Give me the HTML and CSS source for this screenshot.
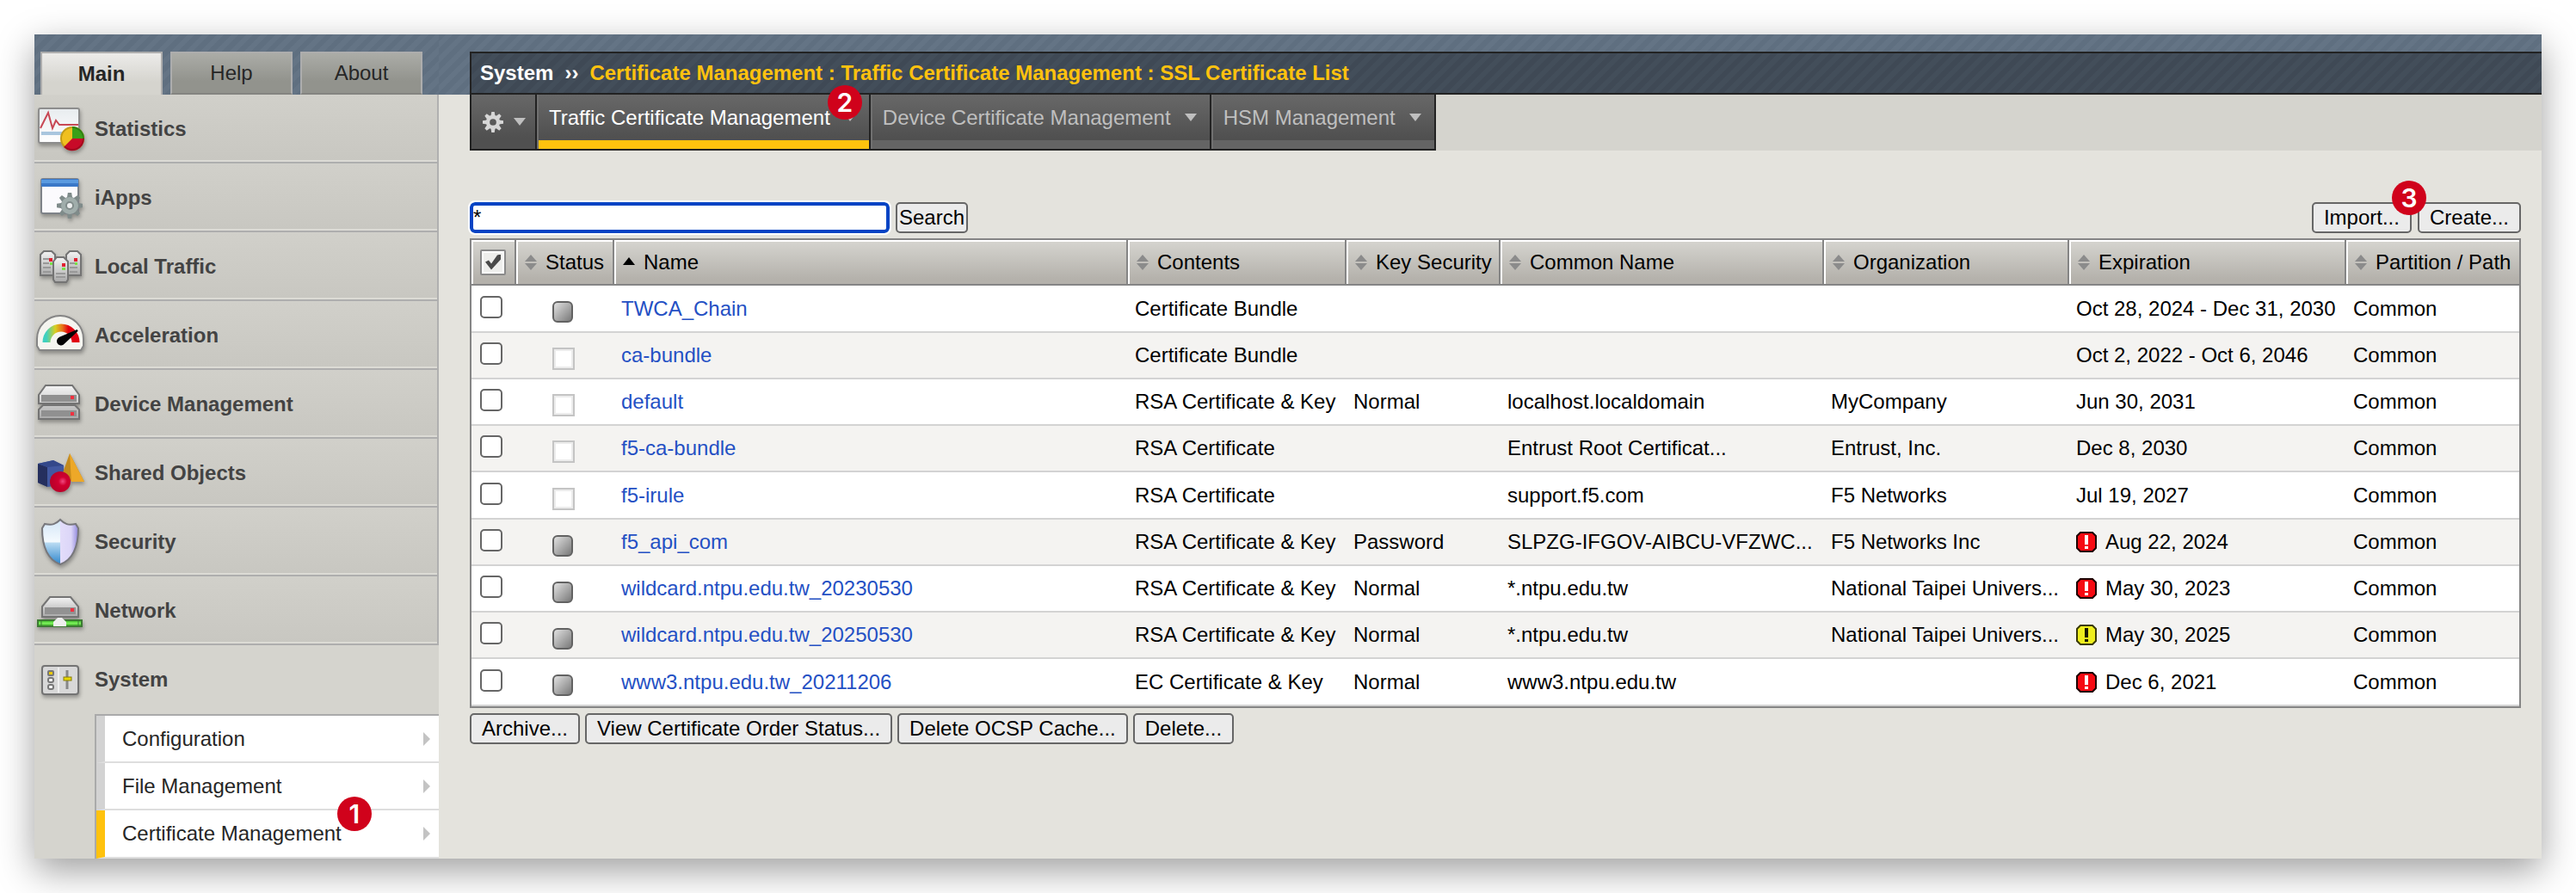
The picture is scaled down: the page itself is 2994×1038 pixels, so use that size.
FILE: index.html
```html
<!DOCTYPE html>
<html lang="en">
<head>
<meta charset="utf-8">
<title>SSL Certificate List</title>
<link rel="stylesheet" href="styles.css">
</head>
<body>
<svg class="defs" aria-hidden="true">
  <defs>
    <linearGradient id="metal" x1="0" y1="0" x2="0" y2="1"><stop offset="0" stop-color="#f4f4f4"/><stop offset="1" stop-color="#a9a9a9"/></linearGradient>
    <linearGradient id="sheet" x1="0" y1="0" x2="0" y2="1"><stop offset="0" stop-color="#e8ecef"/><stop offset="1" stop-color="#ffffff"/></linearGradient>
    <linearGradient id="chip" x1="0" y1="0" x2="1" y2="1"><stop offset="0" stop-color="#e6e6e6"/><stop offset="1" stop-color="#747474"/></linearGradient>
    <linearGradient id="dial" x1="0" y1="0" x2="1" y2="0"><stop offset="0" stop-color="#3fd0c0"/><stop offset=".3" stop-color="#d8d020"/><stop offset=".55" stop-color="#e87018"/><stop offset=".75" stop-color="#e00010"/></linearGradient>
    <linearGradient id="cable" x1="0" y1="0" x2="0" y2="1"><stop offset="0" stop-color="#2db51a"/><stop offset=".5" stop-color="#7df05c"/><stop offset="1" stop-color="#2a9a18"/></linearGradient>
    <linearGradient id="shieldl" x1="0" y1="0" x2="0" y2="1"><stop offset="0" stop-color="#d4e6f7"/><stop offset=".5" stop-color="#f4fafe"/><stop offset=".52" stop-color="#b9dbf2"/><stop offset="1" stop-color="#2f86cc"/></linearGradient>
    <linearGradient id="shieldr" x1="0" y1="0" x2="1" y2="0"><stop offset="0" stop-color="#e3ddfa"/><stop offset=".6" stop-color="#dcd6f8"/><stop offset="1" stop-color="#8f86dc"/></linearGradient>
    <radialGradient id="ball" cx=".62" cy=".48" r=".6"><stop offset="0" stop-color="#f04a80"/><stop offset=".35" stop-color="#d00030"/><stop offset="1" stop-color="#b80028"/></radialGradient>
    <symbol id="sort" viewBox="0 0 14 18"><path d="M7 0l7 8H0zM7 18l7-8H0z" fill="#8b8b8b"/></symbol>
    <symbol id="on" viewBox="0 0 24 25"><rect x="1" y="1" width="22" height="23" rx="5" fill="url(#chip)" stroke="#626262" stroke-width="2"/></symbol>
    <symbol id="off" viewBox="0 0 26 26"><rect x="1" y="1" width="24" height="24" fill="#fff" stroke="#c4c4c4" stroke-width="2"/><path d="M3 3h20v20H3z" fill="none" stroke="#ececec" stroke-width="2"/></symbol>
    <symbol id="expired" viewBox="0 0 24 24"><path d="M5 1h14l4 4v14l-4 4H5l-4-4V5z" fill="#f60a12" stroke="#1c0000" stroke-width="2"/><path d="M10 4h4v11h-4zM10 17h4v3h-4z" fill="#fff"/></symbol>
    <symbol id="warning" viewBox="0 0 24 24"><path d="M5 1h14l4 4v14l-4 4H5l-4-4V5z" fill="#eeee1e" stroke="#3a3a08" stroke-width="2"/><path d="M10 4h4v11h-4zM10 17h4v3h-4z" fill="#1a1a00"/></symbol>
    <symbol id="gear" viewBox="0 0 28 28"><g fill="currentColor"><path d="M12 0h4l1 6h-6zM12 28h4l1-6h-6zM0 12v4l6 1v-6zM28 12v4l-6 1v-6z"/><path d="M12 0h4l1 6h-6zM12 28h4l1-6h-6zM0 12v4l6 1v-6zM28 12v4l-6 1v-6z" transform="rotate(45 14 14)"/></g><circle cx="14" cy="14" r="7" fill="none" stroke="currentColor" stroke-width="5"/></symbol>
  </defs>
</svg>

<div class="window">
  <nav class="side" aria-label="Primary">
    <div class="side-tabs">
      <button class="side-tab active" type="button">Main</button>
      <button class="side-tab" type="button">Help</button>
      <button class="side-tab" type="button">About</button>
    </div>
    <ul class="menu">
      <li><a class="item" href="#statistics">
        <svg class="icon" viewBox="0 0 60 60"><rect x="5" y="6" width="47" height="40" rx="2" fill="url(#sheet)" stroke="#8d8d8d" stroke-width="2"/><path d="M8 35h42" stroke="#a9c6de" stroke-width="4"/><path d="M7 29l4-8 5-10 5 18 4-9 4 5h22" fill="none" stroke="#c84855" stroke-width="2"/><circle cx="44" cy="41" r="14" fill="#f0c020"/><path d="M44 41V27a14 14 0 0 1 14 14z" fill="#3aa018"/><path d="M44 41h14a14 14 0 0 1-24 10z" fill="#c80a28"/><circle cx="44" cy="41" r="13" fill="none" stroke="#00000030" stroke-width="2"/></svg>
        Statistics</a></li>
      <li><a class="item" href="#iapps">
        <svg class="icon" viewBox="0 0 60 60"><rect x="8" y="8" width="43" height="40" rx="2" fill="#fbfafd" stroke="#7e8288" stroke-width="2"/><path d="M8 8h43v9H8z" fill="#3a78c8"/><path d="M8 9h43v4H8z" fill="#5a9ae0"/><svg x="26" y="24" width="30" height="30" color="#7f8b8a"><use href="#gear"/></svg><circle cx="41" cy="39" r="7" fill="none" stroke="#a0adab" stroke-width="6"/><circle cx="41" cy="39" r="4" fill="#eef0f0" stroke="#818c8b" stroke-width="2"/></svg>
        iApps</a></li>
      <li><a class="item" href="#local-traffic">
        <svg class="icon" viewBox="0 0 60 60"><g fill="url(#metal)" stroke="#747474" stroke-width="2"><path d="M7 16l4-4h9l4 4v24H7zM37 16l4-4h9l4 4v24H37z"/><path d="M22 24l4-5h8l5 5v21l-2 3H24l-2-3z"/></g><path d="M10 21h8M10 26h7M10 31h9M10 36h9M41 26h6M41 31h9M41 36h9M25 38h11M25 42h11" stroke="#999" stroke-width="2"/><path d="M17 20h4v4h-4zM46 20h4v4h-4zM32 26h4v4h-4z" fill="#e02030"/><path d="M18 25h3v3h-3zM47 25h3v3h-3zM32 31h4v3h-4z" fill="#7be04a"/></svg>
        Local Traffic</a></li>
      <li><a class="item" href="#acceleration">
        <svg class="icon" viewBox="0 0 60 60"><path d="M6 47l-3-5v-8a27 27 0 0 1 54 0v8l-3 5z" fill="#f5f5f0" stroke="#858585" stroke-width="2"/><path d="M14 38a17 17 0 0 1 34 0" fill="none" stroke="url(#dial)" stroke-width="9"/><path d="M50 24L29 33a4 4 0 0 0 4 7z" fill="#050505" stroke="#050505" stroke-width="2"/></svg>
        Acceleration</a></li>
      <li><a class="item" href="#device-management">
        <svg class="icon" viewBox="0 0 60 60"><g fill="url(#metal)" stroke="#747474" stroke-width="2"><path d="M5 19L13 8h31l8 11v10H5zM5 36l5-5h37l5 5v11H5z"/></g><path d="M8 19h41v8H8zM8 37h41v7H8z" fill="#909090"/><path d="M42 20h4v4h-4zM42 39h4v4h-4z" fill="#f03040"/></svg>
        Device Management</a></li>
      <li><a class="item" href="#shared-objects">
        <svg class="icon" viewBox="0 0 60 60"><path d="M4 19l18-4 12 6v21l-18 4-12-5z" fill="#4258a0"/><path d="M4 19l11 4v23L4 41z" fill="#252f5e"/><path d="M4 19l18-4 12 6-19 2z" fill="#34488a"/><path d="M41 7L30 38l28 2z" fill="#c48a1c"/><path d="M41 7l2 33h15z" fill="#eda828"/><circle cx="30" cy="40" r="12" fill="url(#ball)"/></svg>
        Shared Objects</a></li>
      <li><a class="item" href="#security">
        <svg class="icon" viewBox="0 0 60 60"><path d="M30 4c-5 5-9 7-18 5l-3 5c0 20 5 36 21 42z" fill="url(#shieldl)"/><path d="M30 4c5 5 9 7 18 5l3 5c0 20-5 36-21 42z" fill="url(#shieldr)"/><path d="M30 4c-5 5-9 7-18 5l-3 5c0 20 5 36 21 42 16-6 21-22 21-42l-3-5c-9 2-13 0-18-5z" fill="none" stroke="#77777c" stroke-width="2"/></svg>
        Security</a></li>
      <li><a class="item" href="#network">
        <svg class="icon" viewBox="0 0 60 60"><path d="M9 25l9-11h24l9 11v12H9z" fill="url(#metal)" stroke="#747474" stroke-width="2"/><path d="M12 26h36v8H12z" fill="#929292"/><path d="M42 27h4v4h-4z" fill="#f03040"/><rect x="4" y="41" width="51" height="7" fill="url(#cable)" stroke="#3d7a34" stroke-width="2"/><path d="M8 41v7M51 41v7" stroke="#3d7a34" stroke-width="1"/><path d="M22 48v-5l5-5h5l5 5v5z" fill="#eee"/></svg>
        Network</a></li>
      <li class="open"><a class="item" href="#system">
        <svg class="icon" viewBox="0 0 60 60"><rect x="9" y="14" width="42" height="33" rx="3" fill="#d8d8d8" stroke="#747474" stroke-width="2"/><path d="M28 16v29" stroke="#efefef" stroke-width="2"/><g fill="#f4f4f4" stroke="#777" stroke-width="2"><rect x="16" y="20" width="6" height="5" rx="1" fill="#e8c800"/><rect x="16" y="28" width="6" height="5" rx="2"/><rect x="16" y="36" width="6" height="5" rx="2"/></g><path d="M38 19v22" stroke="#888" stroke-width="3"/><rect x="34" y="27" width="9" height="4" fill="#e8d800" stroke="#857a10"/></svg>
        System</a>
        <ul class="submenu">
          <li><a href="#configuration">Configuration</a></li>
          <li><a href="#file-management">File Management</a></li>
          <li class="current"><a href="#certificate-management"><span class="anchor">Certificate Management<b class="badge badge-menu">1</b></span></a></li>
        </ul>
      </li>
    </ul>
  </nav>

  <main class="main">
    <header class="top">
      <h1 class="crumbs"><span>System</span><span>››</span><span class="path">Certificate Management : Traffic Certificate Management : SSL Certificate List</span></h1>
    </header>
    <div class="tabs">
      <button class="tab options" type="button" aria-label="Options"><svg class="gear" viewBox="0 0 28 28"><use href="#gear"/></svg><i class="caret"></i></button>
      <button class="tab active" type="button"><span class="anchor">Traffic Certificate Management<b class="badge badge-tab">2</b></span><i class="caret"></i></button>
      <button class="tab" type="button">Device Certificate Management<i class="caret"></i></button>
      <button class="tab" type="button">HSM Management<i class="caret"></i></button>
    </div>

    <div class="content">
      <div class="toolbar">
        <input class="search" type="text" value="*" aria-label="Search certificates">
        <button class="btn tight" type="button">Search</button>
        <span class="spacer"></span>
        <button class="btn anchor" type="button">Import...<b class="badge badge-btn">3</b></button>
        <button class="btn" type="button">Create...</button>
      </div>

      <table class="certs">
        <colgroup><col class="c-check"><col class="c-status"><col><col class="c-contents"><col class="c-key"><col class="c-common"><col class="c-org"><col class="c-exp"><col class="c-part"></colgroup>
        <thead>
          <tr>
            <th><label class="all"><input type="checkbox" checked aria-label="Select all"></label></th>
            <th><span class="head"><svg class="sort"><use href="#sort"/></svg>Status</span></th>
            <th><span class="head"><svg class="sort" viewBox="0 0 14 18"><path d="M7 3l7 9H0z"/></svg>Name</span></th>
            <th><span class="head"><svg class="sort"><use href="#sort"/></svg>Contents</span></th>
            <th><span class="head"><svg class="sort"><use href="#sort"/></svg>Key Security</span></th>
            <th><span class="head"><svg class="sort"><use href="#sort"/></svg>Common Name</span></th>
            <th><span class="head"><svg class="sort"><use href="#sort"/></svg>Organization</span></th>
            <th><span class="head"><svg class="sort"><use href="#sort"/></svg>Expiration</span></th>
            <th><span class="head"><svg class="sort"><use href="#sort"/></svg>Partition / Path</span></th>
          </tr>
        </thead>
        <tbody>
          <tr><td><input class="check" type="checkbox" aria-label="TWCA_Chain"></td><td><svg class="state on"><use href="#on"/></svg></td><td><a href="#c1">TWCA_Chain</a></td><td>Certificate Bundle</td><td></td><td></td><td></td><td>Oct 28, 2024 - Dec 31, 2030</td><td>Common</td></tr>
          <tr><td><input class="check" type="checkbox" aria-label="ca-bundle"></td><td><svg class="state"><use href="#off"/></svg></td><td><a href="#c2">ca-bundle</a></td><td>Certificate Bundle</td><td></td><td></td><td></td><td>Oct 2, 2022 - Oct 6, 2046</td><td>Common</td></tr>
          <tr><td><input class="check" type="checkbox" aria-label="default"></td><td><svg class="state"><use href="#off"/></svg></td><td><a href="#c3">default</a></td><td>RSA Certificate &amp; Key</td><td>Normal</td><td>localhost.localdomain</td><td>MyCompany</td><td>Jun 30, 2031</td><td>Common</td></tr>
          <tr><td><input class="check" type="checkbox" aria-label="f5-ca-bundle"></td><td><svg class="state"><use href="#off"/></svg></td><td><a href="#c4">f5-ca-bundle</a></td><td>RSA Certificate</td><td></td><td>Entrust Root Certificat...</td><td>Entrust, Inc.</td><td>Dec 8, 2030</td><td>Common</td></tr>
          <tr><td><input class="check" type="checkbox" aria-label="f5-irule"></td><td><svg class="state"><use href="#off"/></svg></td><td><a href="#c5">f5-irule</a></td><td>RSA Certificate</td><td></td><td>support.f5.com</td><td>F5 Networks</td><td>Jul 19, 2027</td><td>Common</td></tr>
          <tr><td><input class="check" type="checkbox" aria-label="f5_api_com"></td><td><svg class="state on"><use href="#on"/></svg></td><td><a href="#c6">f5_api_com</a></td><td>RSA Certificate &amp; Key</td><td>Password</td><td>SLPZG-IFGOV-AIBCU-VFZWC...</td><td>F5 Networks Inc</td><td><span class="flag"><svg><use href="#expired"/></svg>Aug 22, 2024</span></td><td>Common</td></tr>
          <tr><td><input class="check" type="checkbox" aria-label="wildcard.ntpu.edu.tw_20230530"></td><td><svg class="state on"><use href="#on"/></svg></td><td><a href="#c7">wildcard.ntpu.edu.tw_20230530</a></td><td>RSA Certificate &amp; Key</td><td>Normal</td><td>*.ntpu.edu.tw</td><td>National Taipei Univers...</td><td><span class="flag"><svg><use href="#expired"/></svg>May 30, 2023</span></td><td>Common</td></tr>
          <tr><td><input class="check" type="checkbox" aria-label="wildcard.ntpu.edu.tw_20250530"></td><td><svg class="state on"><use href="#on"/></svg></td><td><a href="#c8">wildcard.ntpu.edu.tw_20250530</a></td><td>RSA Certificate &amp; Key</td><td>Normal</td><td>*.ntpu.edu.tw</td><td>National Taipei Univers...</td><td><span class="flag"><svg><use href="#warning"/></svg>May 30, 2025</span></td><td>Common</td></tr>
          <tr><td><input class="check" type="checkbox" aria-label="www3.ntpu.edu.tw_20211206"></td><td><svg class="state on"><use href="#on"/></svg></td><td><a href="#c9">www3.ntpu.edu.tw_20211206</a></td><td>EC Certificate &amp; Key</td><td>Normal</td><td>www3.ntpu.edu.tw</td><td></td><td><span class="flag"><svg><use href="#expired"/></svg>Dec 6, 2021</span></td><td>Common</td></tr>
        </tbody>
      </table>

      <div class="actions">
        <button class="btn" type="button">Archive...</button>
        <button class="btn" type="button">View Certificate Order Status...</button>
        <button class="btn" type="button">Delete OCSP Cache...</button>
        <button class="btn" type="button">Delete...</button>
      </div>
    </div>
  </main>
</div>
</body>
</html>
```
FILE: styles.css
```css
* { box-sizing: border-box; }

body {
  margin: 0;
  padding: 40px;
  background: #fff;
  color: #000;
  font: 24px/28px "Liberation Sans", Arial, sans-serif;
}

button, input { font: inherit; color: inherit; margin: 0; }
ul { list-style: none; margin: 0; padding: 0; }
a { text-decoration: none; color: #2450c4; }
.defs { position: absolute; width: 0; height: 0; }
.anchor { position: relative; }

.window {
  display: flex;
  min-height: calc(100vh - 80px);
  background: #e4e3dd;
  box-shadow: 0 14px 40px rgba(0, 0, 0, .38);
}

/* Left navigation */
.side {
  display: flex;
  flex-direction: column;
  flex: 0 0 470px;
  background: #d5d4ce;
}

.side-tabs, .top {
  background: repeating-linear-gradient(135deg, #5f6f80 0 6px, #647485 6px 12px);
}

.side-tabs {
  display: flex;
  gap: 9px;
  height: 70px;
  padding: 20px 0 0 7px;
}

.side-tab {
  width: 142px;
  padding: 0;
  border: 2px solid #adadad;
  border-bottom-color: #848480;
  background: linear-gradient(#abaca7, #92938d 70%);
  color: #262626;
}

.side-tab.active {
  border-bottom: 0;
  background: linear-gradient(#ecebe9, #d5d4ce 70%);
  font-weight: bold;
}

.item {
  display: flex;
  align-items: center;
  gap: 10px;
  height: 80px;
  padding-top: 2px;
  border-right: 2px solid #b0b0b0;
  border-bottom: 2px solid #aeaeae;
  box-shadow: inset 0 -2px #dcdbd5;
  background: linear-gradient(#d1d0ca, #c8c7c1);
  color: #434343;
  font-weight: bold;
}

.open .item { border-color: transparent; box-shadow: none; background: none; }
.icon { width: 60px; height: 60px; filter: drop-shadow(1px 3px 2px rgba(0, 0, 0, .3)); }

.submenu {
  margin-left: 70px;
  border: solid #aaa;
  border-width: 2px 0 0 2px;
}

.submenu a {
  display: flex;
  align-items: center;
  justify-content: space-between;
  height: 55px;
  padding: 0 10px 0 20px;
  border-left: 10px solid #d3d3d3;
  border-bottom: 2px solid #dedede;
  background: #fff;
  color: #262626;
}

.submenu .current a { height: 56px; border-left-color: #ffc20e; }

.submenu a::after {
  content: "";
  border: solid transparent;
  border-width: 8px 0 8px 8px;
  border-left-color: #c3c3c3;
}

/* Header and tabs */
.main { flex: 1; min-width: 0; }

.top { padding: 20px 0 0 36px; }

.crumbs {
  display: flex;
  align-items: center;
  gap: 13px;
  height: 50px;
  margin: 0;
  padding-left: 10px;
  border: 2px solid #222;
  border-right: 0;
  background: repeating-linear-gradient(135deg, #3f4955 0 6px, #434e5a 6px 12px);
  color: #fff;
  font-size: 24px;
}

.path { color: #ffc20e; }

.tabs {
  display: flex;
  height: 65px;
  margin-left: 36px;
  background: #d5d4ce;
}

.tab {
  display: flex;
  align-items: center;
  gap: 16px;
  padding: 0 15px 10px 14px;
  border: solid #222;
  border-width: 0 2px 2px 0;
  background: linear-gradient(#686868, #505050 80%);
  box-shadow: inset 2px 0 #707070, inset 0 -10px #646464;
  color: #bfbfbf;
  white-space: nowrap;
}

.tab.active { color: #fff; box-shadow: inset 2px 0 #707070, inset 0 -10px #ffc20e; }

.tab.options {
  gap: 12px;
  padding: 0 11px 0 13px;
  border-left-width: 2px;
  box-shadow: none;
}

.gear { width: 24px; height: 24px; color: #d6d6d6; }

.caret {
  border: solid transparent;
  border-width: 9px 7px 0;
  border-top-color: #bfbfbf;
}

/* Content */
.content { padding: 60px 24px 60px 36px; }

.toolbar, .actions { display: flex; gap: 7px; }
.toolbar { margin-bottom: 6px; }
.actions { gap: 6px; margin-top: 6px; }
.spacer { flex: 1; }

.search {
  width: 488px;
  height: 36px;
  padding: 0;
  border: 4px solid #0544c4;
  border-radius: 6px;
  outline: 2px solid #fff;
  background: #fff;
}

.btn {
  height: 36px;
  padding: 0 12px;
  border: 2px solid #666;
  border-radius: 5px;
  background: #ebebeb;
  line-height: 30px;
}

.btn.tight { padding: 0 2px; }

.certs {
  width: 100%;
  table-layout: fixed;
  border: 2px solid #858585;
  border-spacing: 0;
  background: #fff;
}

.c-check { width: 52px; }
.c-status { width: 114px; }
.c-contents { width: 254px; }
.c-key { width: 179px; }
.c-common { width: 376px; }
.c-org { width: 285px; }
.c-exp { width: 322px; }
.c-part { width: 201px; }

th {
  height: 53px;
  padding: 0 0 0 10px;
  border: solid #858585;
  border-width: 0 2px 2px 0;
  background: linear-gradient(#d6d5d0, #b4b1ab 90%);
  box-shadow: inset 2px 2px #fff;
  font-weight: normal;
  text-align: left;
  white-space: nowrap;
}

th:last-child { border-right: 0; }
.head { display: flex; align-items: center; gap: 10px; }
.sort { width: 14px; height: 18px; }

.all {
  display: flex;
  width: 30px;
  height: 30px;
}

.all input, .check {
  appearance: none;
  display: block;
  background: #fff;
}

.all input {
  width: 30px;
  height: 30px;
  border: 2px solid #8a8a8a;
  border-radius: 2px;
  background: #eeeeec;
  box-shadow: inset 0 0 0 2px #fff;
}

.all input::before {
  content: "";
  display: block;
  width: 18px;
  height: 18px;
  margin: 4px;
  background: #4a4a4a;
  clip-path: polygon(0 9px, 4px 7px, 7px 11px, 14px 1px, 18px 0, 18px 6px, 7px 18px);
}

.all input:not(:checked)::before { visibility: hidden; }

td {
  height: 54px;
  padding: 0 0 0 8px;
  border-bottom: 2px solid #d3d3d3;
  white-space: nowrap;
}

tr:nth-child(4n+1) td { height: 55px; }
tbody tr:nth-child(even) { background: #f4f3f1; }
td:first-child { padding: 0 0 4px 10px; }
td:nth-child(2) { padding: 8px 0 0 42px; }

.check {
  width: 26px;
  height: 26px;
  border: 2px solid #666;
  border-radius: 5px;
}

.check:checked { background: #0544c4; }

.state { display: block; width: 26px; height: 26px; }
.state.on { width: 24px; height: 25px; }
.flag { display: flex; align-items: center; gap: 10px; }
.flag svg { width: 24px; height: 24px; }

/* Numbered step markers */
.badge {
  position: absolute;
  width: 40px;
  height: 40px;
  border-radius: 50%;
  background: #d0021b;
  color: #fff;
  font: 600 30px/40px Inter, sans-serif;
  text-align: center;
}

.badge-menu { right: -35px; top: -29px; }
.badge-tab { right: -37px; top: -24px; }
.badge-btn { right: -19px; top: -27px; }
```
